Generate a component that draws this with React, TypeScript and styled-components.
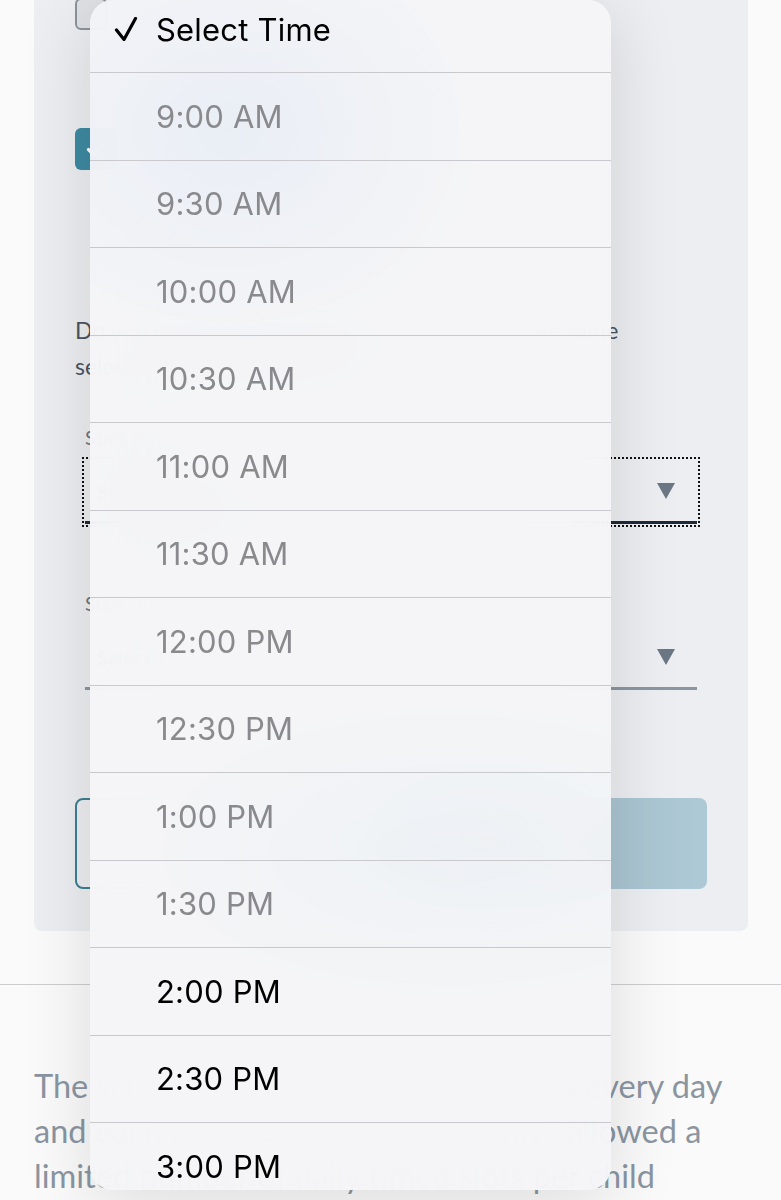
import React from "react";
import styled, { createGlobalStyle } from "styled-components";

const GlobalStyle = createGlobalStyle`
  html, body {
    margin: 0;
    padding: 0;
    background: #fafafa;
  }

  #root {
    width: 781px;
    height: 1200px;
    overflow: hidden;
  }
`;

const options = [
  "9:00 AM",
  "9:30 AM",
  "10:00 AM",
  "10:30 AM",
  "11:00 AM",
  "11:30 AM",
  "12:00 PM",
  "12:30 PM",
  "1:00 PM",
  "1:30 PM",
  "2:00 PM",
  "2:30 PM",
  "3:00 PM",
  "3:30 PM",
  "4:00 PM",
];

// first ten slots are already taken
const takenCount = 10;

const App: React.FC = () => {
  return (
    <>
      <GlobalStyle />
      <Screen>
        <Card>
          <Checkbox />
          <Checkbox checked>
            <svg width="26" height="26" viewBox="0 0 24 24" fill="none">
              <path d="M5 12.5l4.5 4.5L19 7.5" stroke="#fff" strokeWidth="3" strokeLinecap="round" strokeLinejoin="round" />
            </svg>
          </Checkbox>
          <Question>
            Do you want every drop-off time to just stay the same
            <br />
            selected for the whole week?
          </Question>
          <FieldGroup>
            <Label>Start time</Label>
            <Select focused>
              <SelectValue>Select Time</SelectValue>
              <Caret />
            </Select>
            <Label>Stop time</Label>
            <Select>
              <SelectValue>Select Time</SelectValue>
              <Caret />
            </Select>
          </FieldGroup>
          <ButtonRow>
            <Button>Cancel</Button>
            <Button primary>Save</Button>
          </ButtonRow>
        </Card>
        <Divider />
        <Note>
          The school portal is open for bookings every day
          <br />
          and each family on the plan is always allowed a
          <br />
          limited number of daily timed slots per child
        </Note>

        <Menu>
          <MenuHeader>
            <svg width="24" height="24" viewBox="0 0 24 24" fill="none">
              <path d="M2.5 13l7.5 9.5L21.5 1.5" stroke="#000" strokeWidth="3.2" strokeLinecap="round" strokeLinejoin="round" />
            </svg>
            <MenuText>Select Time</MenuText>
          </MenuHeader>
          {options.map((time, i) => (
            <MenuItem key={time}>
              <MenuText disabled={i < takenCount}>{time}</MenuText>
            </MenuItem>
          ))}
        </Menu>
      </Screen>
    </>
  );
};

const Screen = styled.div`
  position: relative;

  width: 781px;
  height: 1200px;
  overflow: hidden;

  background: #fafafa;
  font-family: Lato, "Noto Sans", sans-serif;
`;

const Card = styled.section`
  display: flex;
  flex-direction: column;
  align-items: flex-start;

  box-sizing: border-box;
  margin-left: 34px;
  padding: 0 41px 42px;

  width: 714px;

  background: #edeef1;
  border-radius: 0 0 8px 8px;
`;

const Checkbox = styled.span<{ checked?: boolean }>`
  display: flex;
  align-items: center;
  justify-content: center;

  box-sizing: border-box;
  margin-top: ${(props) => (props.checked ? "98px" : "-2px")};

  width: ${(props) => (props.checked ? "42px" : "32px")};
  height: ${(props) => (props.checked ? "42px" : "32px")};

  background: ${(props) => (props.checked ? "#3d8aa1" : "#dfe1e5")};
  border: ${(props) => (props.checked ? "none" : "2.5px solid #8d939c")};
  border-radius: 6px;
`;

const Question = styled.p`
  margin: 142px 0 0;

  font-size: 23px;
  line-height: 36px;
  color: #4a5461;
  white-space: nowrap;
`;

const FieldGroup = styled.div`
  display: flex;
  flex-direction: column;

  box-sizing: border-box;
  margin-top: 41px;
  padding: 0 10px;

  width: 100%;
`;

const Label = styled.label`
  font-size: 20px;
  line-height: 24px;
  color: #6b7583;

  & + div {
    margin-top: 11px;
  }

  div + & {
    margin-top: 67px;
  }
`;

const Select = styled.div<{ focused?: boolean }>`
  display: flex;
  align-items: center;
  justify-content: space-between;

  box-sizing: border-box;
  padding: 0 22px 0 12px;

  height: 64px;

  border-bottom: 3px solid ${(props) => (props.focused ? "#1f2a37" : "#8b96a2")};
  outline: ${(props) => (props.focused ? "2px dotted #111" : "none")};
  outline-offset: 1px;
`;

const SelectValue = styled.span`
  font-size: 20px;
  color: #2b3440;
`;

const Caret = styled.span`
  width: 0;
  height: 0;

  border-left: 9px solid transparent;
  border-right: 9px solid transparent;
  border-top: 16px solid #6c7785;
`;

const ButtonRow = styled.div`
  display: grid;
  grid-template-columns: 1fr 1fr;
  gap: 18px;

  margin-top: 108px;

  width: 100%;
`;

const Button = styled.button<{ primary?: boolean }>`
  box-sizing: border-box;
  height: 91px;

  font-family: Lato, "Noto Sans", sans-serif;
  font-size: 22px;
  color: ${(props) => (props.primary ? "#fff" : "#3d7f93")};

  background: ${(props) => (props.primary ? "linear-gradient(90deg, #a3bcc8, #adc9d5)" : "transparent")};
  border: ${(props) => (props.primary ? "none" : "2px solid #3d7f93")};
  border-radius: 8px;
`;

const Divider = styled.hr`
  margin: 53px 0 0;

  height: 0;

  border: none;
  border-top: 1.5px solid #cbcdd0;
`;

const Note = styled.p`
  margin: 78px 0 0 34px;

  font-size: 32.5px;
  line-height: 45px;
  color: #8a95a1;
  white-space: nowrap;
`;

const Menu = styled.div`
  position: absolute;
  top: 0;
  left: 90px;

  display: flex;
  flex-direction: column;

  width: 521px;
  height: 1190px;
  overflow: hidden;

  background:
    radial-gradient(ellipse 260px 220px at 140px 130px, rgba(222, 231, 244, 0.5), transparent),
    radial-gradient(ellipse 340px 160px at 360px 850px, rgba(228, 236, 243, 0.4), transparent),
    rgba(245, 245, 247, 0.97);
  backdrop-filter: blur(40px);
  border-radius: 23px;
  box-shadow: 0 10px 70px rgba(0, 0, 0, 0.13);

  font-family: Inter, "Noto Sans", sans-serif;
`;

const MenuHeader = styled.div`
  display: flex;
  align-items: center;
  gap: 18px;

  box-sizing: border-box;
  flex-shrink: 0;
  padding: 0 0 14px 24px;

  height: 72px;
`;

const MenuItem = styled.div`
  display: flex;
  align-items: center;

  box-sizing: border-box;
  flex-shrink: 0;
  padding-left: 66px;

  height: 87.5px;

  border-top: 1.5px solid #c9c9cd;
`;

const MenuText = styled.span<{ disabled?: boolean }>`
  font-size: 31px;
  letter-spacing: 0.2px;
  color: ${(props) => (props.disabled ? "#8a8a8e" : "#000")};
`;

export default App;
